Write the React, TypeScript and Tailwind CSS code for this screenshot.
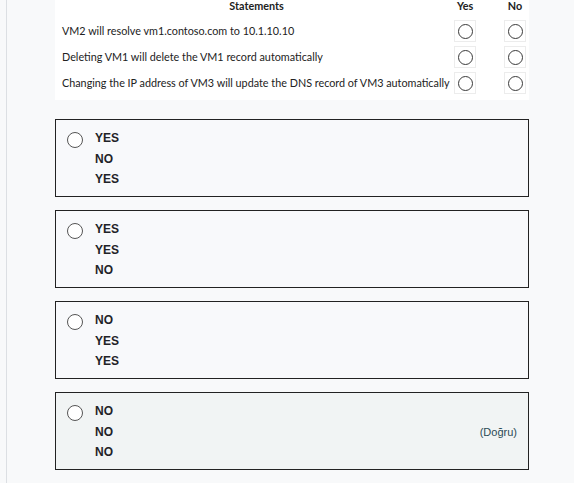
const statements = [
  "VM2 will resolve vm1.contoso.com to 10.1.10.10",
  "Deleting VM1 will delete the VM1 record automatically",
  "Changing the IP address of VM3 will update the DNS record of VM3 automatically",
];

const options = [
  { lines: ["YES", "NO", "YES"], correct: false },
  { lines: ["YES", "YES", "NO"], correct: false },
  { lines: ["NO", "YES", "YES"], correct: false },
  { lines: ["NO", "NO", "NO"], correct: true },
];

const ImgRadio = () => (
  <div className="w-[22px] h-[22px] border border-[#ececec] flex items-center justify-center">
    <div className="w-[15px] h-[15px] rounded-full border-[1.5px] border-[#3a3a3a]"></div>
  </div>
);

const StatementTable = () => (
  <div className="w-[474px] h-[100px] bg-white font-['Lato',sans-serif] text-[10.8px] text-[#222]">
    <div className="flex h-[18px] items-start leading-[11px] font-bold">
      <div className="w-[397px] text-center pl-[7px]">Statements</div>
      <div className="w-[28px] text-center">Yes</div>
      <div className="w-[22px]"></div>
      <div className="w-[28px] text-center">No</div>
    </div>
    {statements.map((s) => (
      <div key={s} className="flex h-[26px] items-center">
        <div className="w-[397px] pl-[7px] whitespace-nowrap">{s}</div>
        <div className="w-[28px] flex justify-center">
          <ImgRadio />
        </div>
        <div className="w-[22px]"></div>
        <div className="w-[28px] flex justify-center">
          <ImgRadio />
        </div>
      </div>
    ))}
  </div>
);

const AnswerBox = ({ lines, correct }: { lines: string[]; correct: boolean }) => (
  <div
    className={`w-[474px] h-[78px] border border-[#222] flex pl-[11px] pr-[11px] pt-[8px] ${
      correct ? "bg-[#f1f4f4]" : "bg-[#f8f9fb]"
    }`}
  >
    <div className="w-[16px] h-[16px] mt-[4px] rounded-full border border-[#555] bg-white shrink-0"></div>
    <div className="ml-[12px] flex flex-col text-[12px] font-bold leading-[20.5px] text-[#1f2328]">
      {lines.map((l, i) => (
        <div key={i}>{l}</div>
      ))}
    </div>
    {correct && (
      <div className="ml-auto self-center -mt-[6px] text-[11px] text-[#2b4a55]">(Doğru)</div>
    )}
  </div>
);

export default function App() {
  return (
    <div className="w-[574px] h-[483px] overflow-hidden bg-[#f8f9fa] font-['Liberation_Sans',Arial,sans-serif]">
      <div className="ml-[6px] h-full border-l border-[#dcdfe3] pl-[48px]">
        <StatementTable />
        <div className="mt-[19px] flex flex-col gap-[13px]">
          {options.map((o, i) => (
            <AnswerBox key={i} lines={o.lines} correct={o.correct} />
          ))}
        </div>
      </div>
    </div>
  );
}
